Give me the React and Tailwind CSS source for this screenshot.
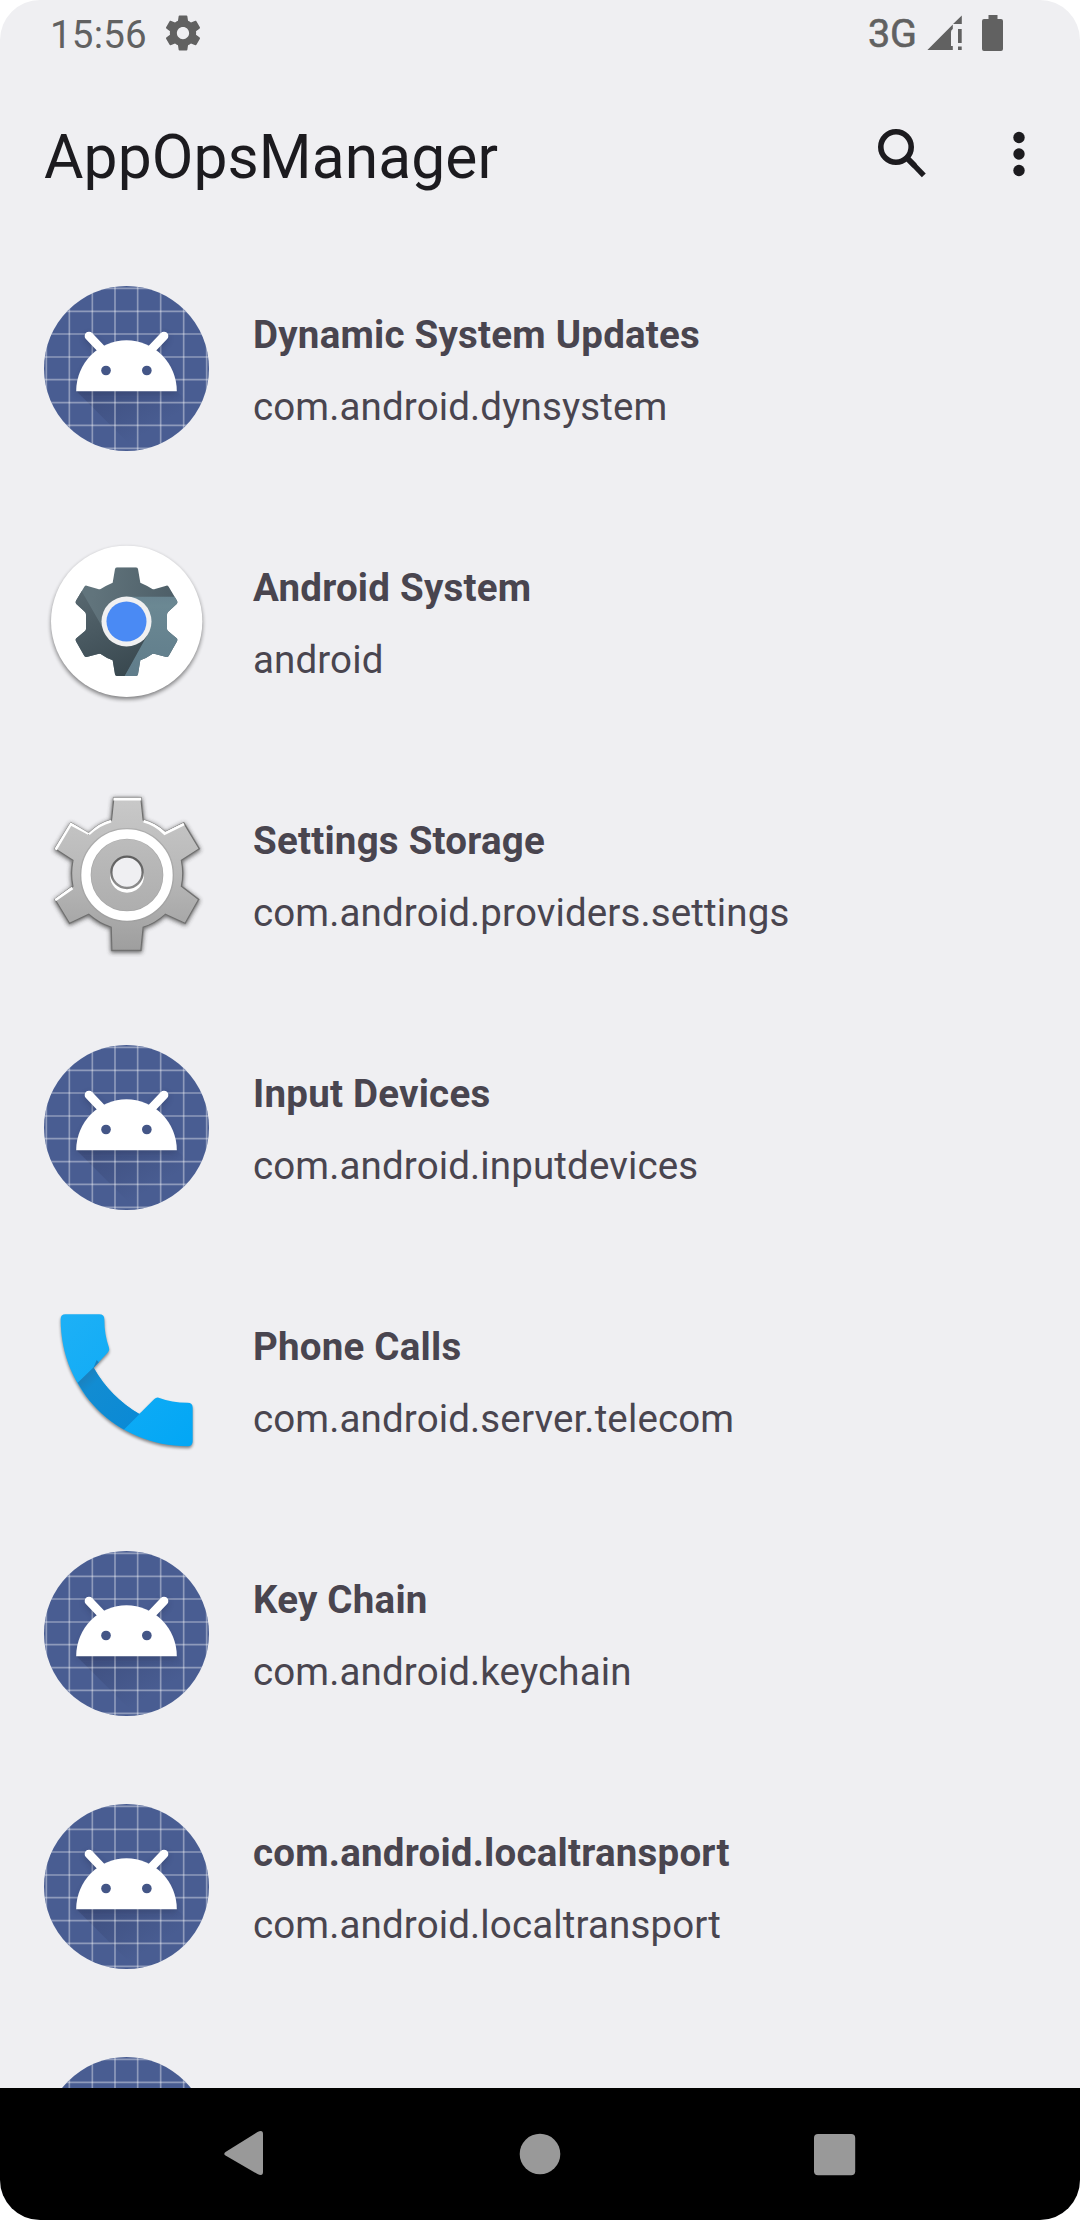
import React from "react";

const GRID_X = [49, 118, 187, 255, 323, 392, 461, 530];
const GRID_Y = [55, 124, 192, 261, 329, 398, 466, 535];

function RobotIcon({ id }) {
  return (
    <svg viewBox="42 48 495 495" className="size-[165px] shrink-0">
      <defs>
        <clipPath id={`${id}-clip`}>
          <circle cx="289.5" cy="295.5" r="247.5" />
        </clipPath>
        <linearGradient id={`${id}-long`} gradientUnits="userSpaceOnUse" x1="240" y1="350" x2="330" y2="500">
          <stop offset="0" stopColor="#33406b" stopOpacity="0.42" />
          <stop offset="1" stopColor="#33406b" stopOpacity="0" />
        </linearGradient>
        <filter id={`${id}-soft`} x="-20%" y="-20%" width="140%" height="140%">
          <feGaussianBlur stdDeviation="9" />
        </filter>
      </defs>
      <g clipPath={`url(#${id}-clip)`}>
        <rect x="42" y="48" width="495" height="495" fill="#495d92" />
        <path d="M139 363L319 543H537V460L440 363Z" fill={`url(#${id}-long)`} />
        <g stroke="#fff" strokeOpacity="0.38" strokeWidth="5">
          {GRID_X.map((x) => (
            <line key={x} x1={x} x2={x} y1="48" y2="543" />
          ))}
          {GRID_Y.map((y) => (
            <line key={y} x1="42" x2="537" y1={y} y2={y} />
          ))}
        </g>
        <g filter={`url(#${id}-soft)`} opacity="0.25" transform="translate(0 8)">
          <path d="M139 363A151 152 0 0 1 440 363Z" fill="#1c2340" />
          <path d="M177 198L215 240M402 198L364 240" stroke="#1c2340" strokeWidth="26" strokeLinecap="round" />
        </g>
      </g>
      <path d="M138.500 363.500A151 152.500 0 0 1 440.500 363.500Z" fill="#fff" />
      <path d="M177 198L217 240M402 198L362 240" stroke="#fff" strokeWidth="26" strokeLinecap="round" />
      <circle cx="228" cy="301.500" r="14.500" fill="#445687" />
      <circle cx="350.500" cy="301.500" r="14.500" fill="#445687" />
    </svg>
  );
}

const GEAR =
  "M261 142H318Q323 142 324 147L331 188Q350 196 367 207Q371 209 375 207L409 197Q413 196 416 200L442 244Q444 249 440 252L414 276Q411 279 411 284V326Q411 330 414 333L440 355Q444 358 442 362L416 408Q413 412 409 411L375 402Q371 401 367 402Q350 414 331 421L324 463Q323 468 318 468H261Q256 468 255 463L248 421Q229 414 212 402Q208 401 204 402L170 411Q166 412 163 408L137 362Q135 358 139 355L165 333Q168 330 168 326V284Q168 279 165 276L139 252Q135 249 137 244L163 200Q166 196 170 197L204 207Q208 209 212 207Q229 196 248 188L255 147Q256 142 261 142Z";

function SystemGearIcon() {
  return (
    <svg viewBox="42 57 495 495" className="size-[165px] shrink-0">
      <defs>
        <clipPath id="sys-gear">
          <path d={GEAR} />
        </clipPath>
        <linearGradient id="sys-top" gradientUnits="userSpaceOnUse" x1="190" y1="200" x2="440" y2="230">
          <stop offset="0" stopColor="#61747c" />
          <stop offset="1" stopColor="#4d5e67" />
        </linearGradient>
        <linearGradient id="sys-left" gradientUnits="userSpaceOnUse" x1="170" y1="220" x2="280" y2="470">
          <stop offset="0" stopColor="#56666e" />
          <stop offset="0.5" stopColor="#47575f" />
          <stop offset="1" stopColor="#39484f" />
        </linearGradient>
        <linearGradient id="sys-right" gradientUnits="userSpaceOnUse" x1="400" y1="230" x2="400" y2="460">
          <stop offset="0" stopColor="#688490" />
          <stop offset="0.12" stopColor="#6b8893" />
          <stop offset="1" stopColor="#607d8b" />
        </linearGradient>
        <filter id="sys-shadow" x="-20%" y="-20%" width="140%" height="140%">
          <feGaussianBlur stdDeviation="6" />
        </filter>
      </defs>
      <circle cx="290" cy="311" r="227" fill="#000" opacity="0.48" filter="url(#sys-shadow)" />
      <circle cx="290" cy="304" r="227" fill="#fff" />
      <g clipPath="url(#sys-gear)">
        <rect x="130" y="140" width="320" height="332" fill="url(#sys-top)" />
        <path d="M150 205L225 335L360 340L283 470H130V205Z" fill="url(#sys-left)" />
        <path d="M289 230H450V472H282L352 345Z" fill="url(#sys-right)" />
      </g>
      <circle cx="289.500" cy="304.500" r="75" fill="#f0f0f1" />
      <circle cx="289.500" cy="304.500" r="60" fill="#4a8af4" />
    </svg>
  );
}

const METAL =
  "M250 82H334L341 149Q376 158 406 185L462 157L510 237L456 272Q464 310 456 348L508 388L466 462L406 435Q376 462 341 473L334 543H244L242 473Q207 462 176 435L118 462L73 388L127 348Q119 310 127 272L73 237L122 157L176 189Q207 158 243 149Z";

function MetalGearIcon() {
  return (
    <svg viewBox="42 66 495 495" className="size-[165px] shrink-0">
      <defs>
        <clipPath id="metal-clip">
          <path d={METAL} />
        </clipPath>
        <linearGradient id="metal-fill" x1="0" y1="0" x2="0" y2="1">
          <stop offset="0" stopColor="#c9c9c9" />
          <stop offset="0.5" stopColor="#b8b8b8" />
          <stop offset="1" stopColor="#9e9e9e" />
        </linearGradient>
        <linearGradient id="metal-inner" x1="0" y1="0" x2="0" y2="1">
          <stop offset="0" stopColor="#bdbdbd" />
          <stop offset="1" stopColor="#adadad" />
        </linearGradient>
        <linearGradient id="metal-rim" x1="0" y1="0" x2="0" y2="1">
          <stop offset="0" stopColor="#5e5e5e" />
          <stop offset="0.5" stopColor="#6c6c6c" />
          <stop offset="0.8" stopColor="#8a8a8a" />
        </linearGradient>
        <filter id="metal-blur" x="-20%" y="-20%" width="140%" height="140%">
          <feGaussianBlur stdDeviation="6" />
        </filter>
        <filter id="metal-edge" x="-20%" y="-20%" width="140%" height="140%">
          <feGaussianBlur stdDeviation="2" />
        </filter>
      </defs>
      <path
        d={METAL}
        transform="translate(0 3)"
        fill="#333"
        stroke="#333"
        strokeWidth="4"
        opacity="0.7"
        filter="url(#metal-blur)"
      />
      <path d={METAL} fill="url(#metal-fill)" stroke="#8b8b8b" strokeWidth="2" strokeLinejoin="round" />
      <g clipPath="url(#metal-clip)">
        <path d={METAL} fill="none" stroke="#6f6f6f" strokeWidth="7" filter="url(#metal-edge)" />
        <g fill="none" stroke="#fff" strokeWidth="9" filter="url(#metal-edge)">
          <path d="M250 87H334M341 153Q376 162 404 190L462 162M176 190L122 162L76 239M176 192Q207 162 243 153M75 390L127 354" />
        </g>
      </g>
      <circle cx="291" cy="315" r="124" fill="url(#metal-inner)" stroke="#999" strokeOpacity="0.5" strokeWidth="34" />
      <circle cx="291" cy="315" r="123" fill="none" stroke="#fff" strokeWidth="28" />
      <circle cx="291" cy="317" r="51" fill="#fff" filter="url(#metal-edge)" />
      <circle cx="291" cy="307" r="47" fill="#efeff2" />
      <circle cx="291" cy="307" r="47" fill="none" stroke="url(#metal-rim)" strokeWidth="7" filter="url(#metal-edge)" />
    </svg>
  );
}

function PhoneIcon() {
  const outline =
    "M106 103H208Q223 103 223 118Q223 165 237 203Q240 211 234 217L191 263Q240 350 328 402L373 357Q379 351 386 353Q425 368 473 368Q488 368 488 383V484Q488 499 473 499C260 499 92 330 92 118Q92 103 106 103Z";
  return (
    <svg viewBox="42 54 495 495" className="size-[165px] shrink-0">
      <defs>
        <linearGradient id="ph-light" gradientUnits="userSpaceOnUse" x1="100" y1="110" x2="480" y2="490">
          <stop offset="0" stopColor="#1db0f6" />
          <stop offset="1" stopColor="#03a7f5" />
        </linearGradient>
        <linearGradient id="ph-dark" gradientUnits="userSpaceOnUse" x1="165" y1="283" x2="305" y2="425">
          <stop offset="0" stopColor="#1b80bd" />
          <stop offset="0.2" stopColor="#128cd2" />
          <stop offset="1" stopColor="#0b8ad5" />
        </linearGradient>
        <clipPath id="ph-clip">
          <path d={outline} />
        </clipPath>
        <filter id="ph-shadow" x="-20%" y="-20%" width="140%" height="140%">
          <feGaussianBlur stdDeviation="5" />
        </filter>
      </defs>
      <path d={outline} transform="translate(0 6)" fill="#000" opacity="0.45" filter="url(#ph-shadow)" />
      <path d={outline} fill="url(#ph-light)" />
      <path d="M191 262L143 308L250 480L283 448L329 402L340 380L200 240Z" fill="url(#ph-dark)" clipPath="url(#ph-clip)" />
    </svg>
  );
}

const APPS = [
  { name: "Dynamic System Updates", pkg: "com.android.dynsystem", icon: "robot" },
  { name: "Android System", pkg: "android", icon: "system" },
  { name: "Settings Storage", pkg: "com.android.providers.settings", icon: "metal" },
  { name: "Input Devices", pkg: "com.android.inputdevices", icon: "robot" },
  { name: "Phone Calls", pkg: "com.android.server.telecom", icon: "phone" },
  { name: "Key Chain", pkg: "com.android.keychain", icon: "robot" },
  { name: "com.android.localtransport", pkg: "com.android.localtransport", icon: "robot" },
  { name: "", pkg: "", icon: "robot" },
];

function AppIcon({ kind, id }) {
  if (kind === "system") return <SystemGearIcon />;
  if (kind === "metal") return <MetalGearIcon />;
  if (kind === "phone") return <PhoneIcon />;
  return <RobotIcon id={id} />;
}

function StatusBar() {
  return (
    <div className="flex h-[66px] shrink-0 items-start justify-between pr-[77px] pl-[50px] text-[#616161]">
      <div className="flex items-start">
        <span className="w-[112px] pt-[12px] text-[38.5px] leading-[45px] tracking-[0.2px]">15:56</span>
        <svg viewBox="0 0 24 24" className="mt-[12px] size-[42px]" fill="currentColor">
          <path d="M19.43 12.98c.04-.32.07-.64.07-.98s-.03-.66-.07-.98l2.110-1.650c.19-.15.24-.42.12-.64l-2-3.460c-.12-.22-.39-.3-.61-.22l-2.490 1c-.52-.4-1.080-.73-1.690-.98l-.38-2.650C14.460 2.180 14.250 2 14 2h-4c-.25 0-.46.18-.49.42l-.38 2.650c-.61.25-1.170.59-1.690.98l-2.490-1c-.23-.09-.49 0-.61.22l-2 3.460c-.13.22-.07.49.12.64l2.110 1.650c-.04.32-.07.65-.07.98s.03.66.07.98l-2.110 1.650c-.19.15-.24.42-.12.64l2 3.460c.12.22.39.3.61.22l2.490-1c.52.4 1.080.73 1.690.98l.38 2.650c.03.24.24.42.49.42h4c.25 0 .46-.18.49-.42l.38-2.650c.61-.25 1.170-.59 1.690-.98l2.490 1c.23.09.49 0 .61-.22l2-3.460c.12-.22.07-.49-.12-.64l-2.110-1.650zM12 15.500c-1.930 0-3.500-1.570-3.500-3.500s1.570-3.500 3.500-3.500 3.500 1.570 3.500 3.500-1.570 3.500-3.500 3.500z" />
        </svg>
      </div>
      <div className="flex items-start">
        <span className="pt-[11px] text-[39.5px] leading-[45px] [-webkit-text-stroke:0.6px_#616161]">3G</span>
        <svg viewBox="927 15 36 37" className="mt-[15px] ml-[10px] h-[37px] w-[36px]" fill="currentColor">
          <path d="M927.400 50L952.800 24.500V29Q951 30 951 32V46H952.800V50ZM953 24L961.800 15.500V24ZM958 29H961.700V43H958ZM958 46.500H961.700V50H958Z" />
        </svg>
        <svg viewBox="0 0 21 37" className="mt-[15px] ml-[19px] h-[37px] w-[21px]" fill="currentColor">
          <path d="M6.500 0H15.500V4H19Q21 4 21 6V34Q21 36 19 36H2Q0 36 0 34V6Q0 4 2 4H6.500Z" />
        </svg>
      </div>
    </div>
  );
}

export default function App() {
  return (
    <div className="h-[2220px] w-[1080px] bg-white font-['Roboto',sans-serif]">
      <div className="flex h-full flex-col overflow-hidden rounded-[40px] bg-[#efeff2]">
        <StatusBar />
        <header className="flex h-[176px] shrink-0 items-center justify-between pr-[44px] pl-[44px] text-[#1c1b1f]">
          <h1 className="pt-[7px] text-[60.5px] leading-[72px] tracking-[0.1px]">AppOpsManager</h1>
          <div className="flex items-center">
            <svg viewBox="0 0 66 66" className="size-[66px]" fill="none" stroke="currentColor">
              <circle cx="27" cy="26" r="15.200" strokeWidth="5.600" />
              <path d="M39 38L54.800 54.400" strokeWidth="5.400" />
              <path d="M40 39L45 44" strokeWidth="5.600" strokeLinecap="round" />
            </svg>
            <svg viewBox="0 0 34 66" className="ml-[67px] h-[66px] w-[34px]" fill="currentColor">
              <circle cx="17" cy="16.500" r="5.700" />
              <circle cx="17" cy="33" r="5.700" />
              <circle cx="17" cy="49.500" r="5.700" />
            </svg>
          </div>
        </header>
        <main className="min-h-0 flex-1 overflow-hidden">
          {APPS.map((app, i) => (
            <div key={i} className="flex h-[253px] items-center px-[44px]">
              <AppIcon kind={app.icon} id={`app${i}`} />
              <div className="pt-[4px] pl-[44px] text-[38.5px] leading-[72px] text-[#49454f]">
                <p className="font-bold tracking-[0.22px]">{app.name}</p>
                <p className="tracking-[0.13px]">{app.pkg}</p>
              </div>
            </div>
          ))}
        </main>
        <nav className="flex h-[132px] shrink-0 items-center justify-center bg-black">
          <svg viewBox="0 0 640 60" className="h-[60px] w-[640px]" fill="#999">
            <path d="M5.500 28L37.500 8Q43 5.500 43 10V48Q43 52.500 37.500 50L5.500 31.500Q3 30 5.500 28Z" />
            <circle cx="320" cy="30" r="20.300" />
            <rect x="594" y="10" width="41.200" height="41.300" rx="4" />
          </svg>
        </nav>
      </div>
    </div>
  );
}
